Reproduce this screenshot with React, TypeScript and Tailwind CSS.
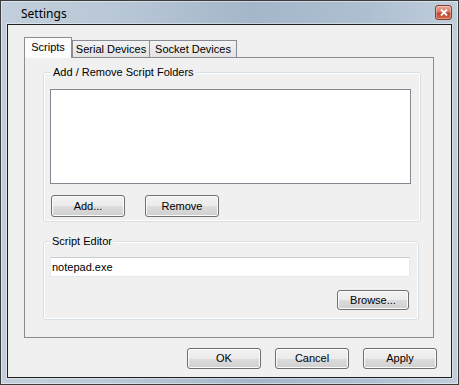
import React from "react";

const btn =
  "flex items-center justify-center rounded-[3px] border border-[#707070] bg-[linear-gradient(#f2f2f2_0%,#ebebeb_50%,#dddddd_50%,#cfcfcf_100%)] shadow-[inset_0_0_0_1px_#fbfbfb] text-[11px] text-black leading-none";

function Button({ label, w, h }: { label: string; w: string; h: string }) {
  return <div className={`${btn} ${w} ${h}`}>{label}</div>;
}

export default function App() {
  return (
    <div
      className="w-[459px] h-[385px] border border-[#3c3c3c] flex flex-col bg-[linear-gradient(90deg,#c2cedb_0%,#b9c8d7_25%,#a4b6c9_55%,#adbfd1_80%,#c0cedc_100%)] shadow-[inset_0_0_0_1px_rgba(255,255,255,0.45)]"
      style={{ fontFamily: '"Liberation Sans", Arial, sans-serif' }}
    >
      {/* title bar */}
      <div className="h-[23px] flex items-start justify-between pl-[20px] pr-[6px]">
        <span
          className="text-[12px] leading-[16px] mt-[5px] text-black"
          style={{ fontFamily: '"Noto Sans", "Open Sans", sans-serif' }}
        >
          Settings
        </span>
        <div className="mt-[4px] w-[17px] h-[15px] rounded-[3px] border border-[#8a3c2c] bg-[linear-gradient(#e9a896_0%,#d97a62_45%,#c2452c_55%,#d06a4c_100%)] shadow-[inset_0_0_0_1px_rgba(255,255,255,0.35)] flex items-center justify-center">
          <svg width="8" height="7" viewBox="0 0 8 7">
            <path d="M1 0.5 L7 6.5 M7 0.5 L1 6.5" stroke="#ffffff" strokeWidth="1.8" />
          </svg>
        </div>
      </div>

      {/* client area */}
      <div className="mx-[6px] mb-[6px] flex-1 border border-[#1e1e1e] bg-[#f0f0f0] flex flex-col shadow-[0_0_0_1px_rgba(255,255,255,0.4)] text-black text-[11px]">
        <div className="pt-[12px] pl-[16px] flex flex-col">
          {/* tab strip */}
          <div className="flex items-end h-[20px]">
            <div className="relative z-10 -mb-px w-[48px] h-[21px] border border-b-0 border-[#898c95] bg-[#fcfcfc] flex items-start justify-center pt-[3px] leading-[13px]">
              Scripts
            </div>
            <div className="w-[78px] h-[17px] border border-b-0 border-[#898c95] bg-[linear-gradient(#f2f2f2,#e3e3e3)] flex items-start justify-center pt-[2px] leading-[13px]">
              Serial Devices
            </div>
            <div className="w-[87px] h-[17px] border border-b-0 border-l-0 border-[#898c95] bg-[linear-gradient(#f2f2f2,#e3e3e3)] flex items-start justify-center pt-[2px] leading-[13px]">
              Socket Devices
            </div>
          </div>

          {/* tab panel */}
          <div className="w-[410px] h-[281px] border border-[#898c95] bg-[#f0f0f0] flex flex-col">
            {/* group 1 */}
            <div className="relative ml-[18px] mt-[14px] w-[378px] h-[150px] border border-[#d5dfe5] rounded-[3px] shadow-[inset_0_0_0_1px_#ffffff] pl-[6px] pt-[16px] flex flex-col">
              <span className="absolute -top-[7px] left-[7px] px-[2px] bg-[#f0f0f0] leading-[13px]">
                Add / Remove Script Folders
              </span>
              <div className="w-[361px] h-[95px] border border-[#828790] bg-white" />
              <div className="flex mt-[11px] ml-[1px] gap-[20px]">
                <Button label="Add..." w="w-[74px]" h="h-[22px]" />
                <Button label="Remove" w="w-[74px]" h="h-[22px]" />
              </div>
            </div>

            {/* group 2 */}
            <div className="relative ml-[18px] mt-[19px] w-[376px] h-[79px] border border-[#d5dfe5] rounded-[3px] shadow-[inset_0_0_0_1px_#ffffff] pl-[6px] pt-[15px] flex flex-col">
              <span className="absolute -top-[7px] left-[6px] px-[2px] bg-[#f0f0f0] leading-[13px]">
                Script Editor
              </span>
              <div className="w-[360px] h-[20px] border border-[#e3e9ef] border-t-[#c8ccd2] bg-white flex items-center pl-[1px] leading-[13px]">
                notepad.exe
              </div>
              <div className="self-end mr-[9px] mt-[13px]">
                <Button label="Browse..." w="w-[72px]" h="h-[20px]" />
              </div>
            </div>
          </div>
        </div>

        {/* bottom buttons */}
        <div className="mt-[10px] flex justify-end gap-[14px] pr-[14px]">
          <Button label="OK" w="w-[74px]" h="h-[21px]" />
          <Button label="Cancel" w="w-[74px]" h="h-[21px]" />
          <Button label="Apply" w="w-[74px]" h="h-[21px]" />
        </div>
      </div>
    </div>
  );
}
